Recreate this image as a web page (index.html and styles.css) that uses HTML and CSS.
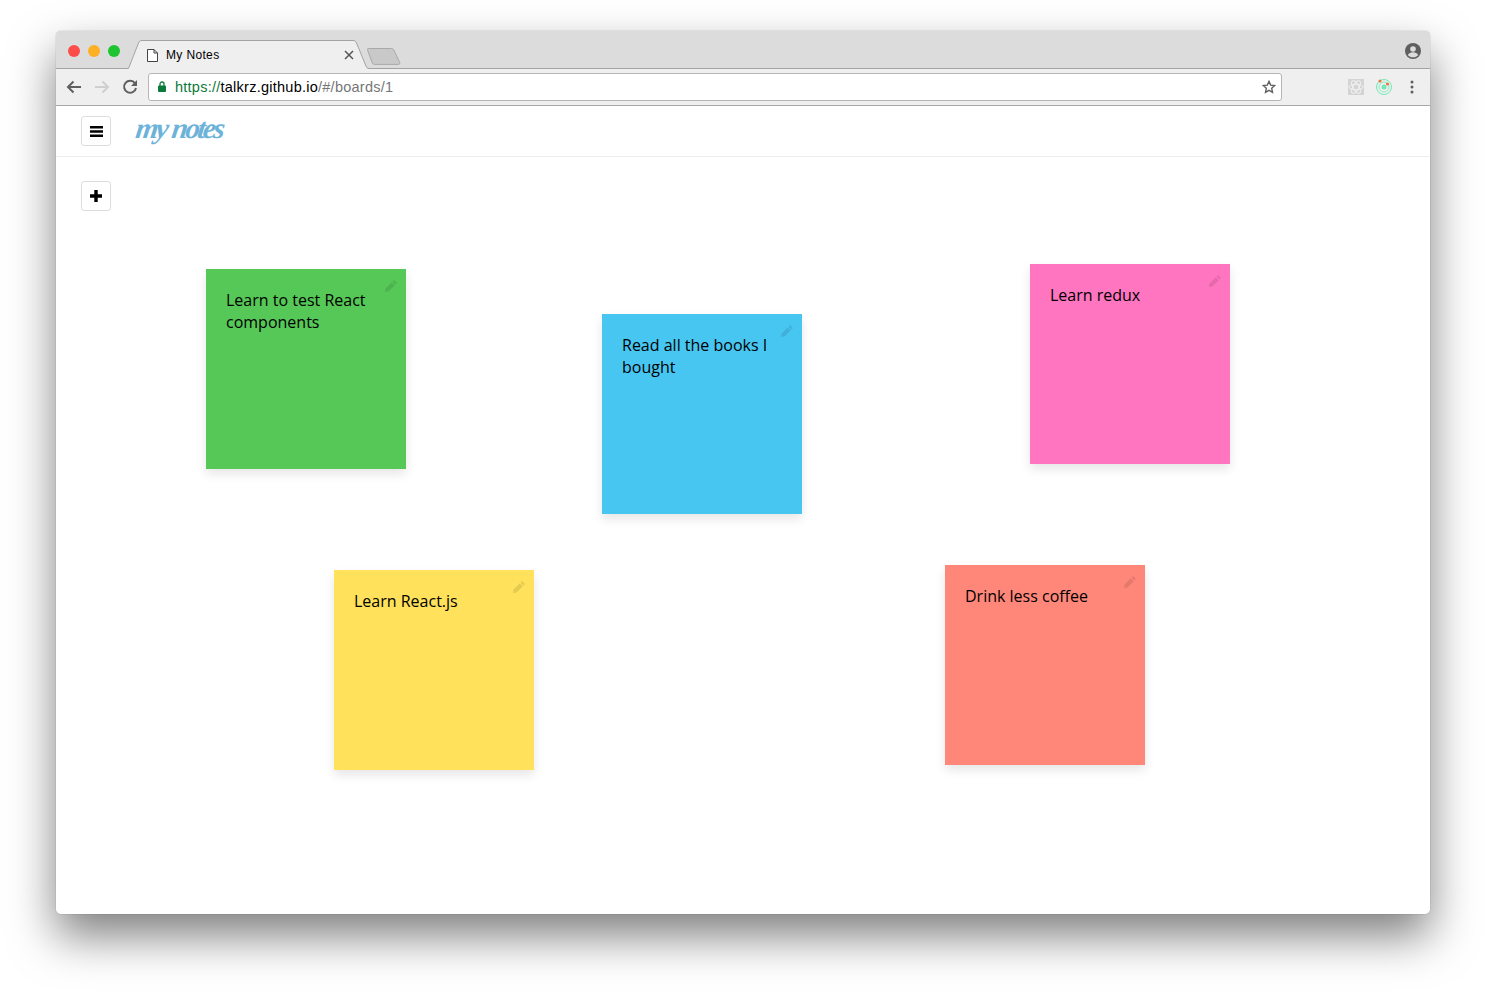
FILE: index.html
```html
<!DOCTYPE html>
<html lang="en">
<head>
    <meta charset="UTF-8">
    <title>My Notes</title>
    <link rel="stylesheet" href="styles.css">
</head>
<body>
    <div class="window">
        <div class="tabstrip">
            <div class="lights">
                <span class="light red"></span>
                <span class="light yellow"></span>
                <span class="light green"></span>
            </div>
            <div class="tab">
                <svg class="tab-shape" width="246" height="29" viewBox="0 0 246 29">
                    <path d="M0 29L10.500 3C11.200 1.400 12 .5 14 .5h211c2 0 2.800.9 3.500 2.500L238 26c.7 1.600 1.500 3 3.500 3z" fill="#efefef"/>
                    <path d="M0 28.500h.5L10.500 3C11.200 1.400 12 .5 14 .5h211c2 0 2.800.9 3.500 2.500L238 26c.7 1.600 1.500 2.500 3.500 2.500h4.500" fill="none" stroke="#a3a3a3"/>
                </svg>
                <svg class="page-icon" width="11" height="13" viewBox="0 0 11 13">
                    <path d="M.5.5h6.500l3.500 3.500v8.500h-10zM7 .5v3.500h3.500" fill="#fff" stroke="#444"/>
                </svg>
                <span class="tab-title">My Notes</span>
                <svg class="tab-close" width="10" height="10" viewBox="0 0 10 10">
                    <path d="M1 1l8 8M9 1l-8 8" stroke="#555" stroke-width="1.500"/>
                </svg>
            </div>
            <svg class="new-tab" width="34" height="17" viewBox="0 0 34 17">
                <path d="M1.500.5h23c1.200 0 1.800.5 2.300 1.400l5.900 12.600c.4 1-.1 1.900-1.300 1.900h-24c-1 0-1.600-.5-2-1.300L.5 2C0 1.200.4.500 1.500.5z" fill="#c9c9c9" stroke="#a8a8a8"/>
            </svg>
            <svg class="profile" width="16" height="16" viewBox="0 0 16 16">
                <circle cx="8" cy="8" r="8" fill="#5f5f5f"/>
                <circle cx="8" cy="6" r="2.800" fill="#dcdcdc"/>
                <path d="M2.800 12c1-2 3-2.800 5.200-2.800s4.200.8 5.200 2.800c-1.300 1.500-3.100 2.300-5.200 2.300S4.100 13.500 2.800 12z" fill="#dcdcdc"/>
            </svg>
        </div>

        <div class="toolbar">
            <svg class="tool-icon" width="16" height="14" viewBox="0 0 16 14">
                <path d="M15 7H2.500M7.500 1.500L2 7l5.500 5.500" fill="none" stroke="#5f5f5f" stroke-width="2"/>
            </svg>
            <svg class="tool-icon" width="16" height="14" viewBox="0 0 16 14">
                <path d="M1 7h12.500M8.500 1.500L14 7l-5.500 5.500" fill="none" stroke="#cfcfcf" stroke-width="2"/>
            </svg>
            <svg class="tool-icon" width="16" height="16" viewBox="0 0 16 16">
                <path d="M13 4.300A6 6 0 1 0 14 9" fill="none" stroke="#5f5f5f" stroke-width="2"/>
                <path d="M15 1v6H9z" fill="#5f5f5f"/>
            </svg>
            <div class="omnibox">
                <svg class="lock" width="8" height="11" viewBox="0 0 8 11">
                    <path d="M2 5V3a2 2 0 0 1 4 0v2" fill="none" stroke="#0b7a3b" stroke-width="1.300"/>
                    <rect y="4.500" width="8" height="6.500" rx="1" fill="#0b7a3b"/>
                </svg>
                <span class="url"><span class="url-scheme">https://</span><span class="url-host">talkrz.github.io</span><span class="url-path">/#/boards/1</span></span>
                <svg class="star" width="14" height="14" viewBox="0 0 14 14">
                    <path d="M7 1.400l1.700 3.700 4 .5-3 2.700.8 4L7 10.300l-3.500 2 .8-4-3-2.700 4-.5z" fill="none" stroke="#5f5f5f" stroke-width="1.400"/>
                </svg>
            </div>
            <div class="extensions">
                <svg width="16" height="16" viewBox="0 0 16 16">
                    <rect width="16" height="16" fill="#d4d4d4"/>
                    <g fill="none" stroke="#f1f1f1">
                        <ellipse cx="8" cy="8" rx="7" ry="2.800"/>
                        <ellipse cx="8" cy="8" rx="7" ry="2.800" transform="rotate(60 8 8)"/>
                        <ellipse cx="8" cy="8" rx="7" ry="2.800" transform="rotate(120 8 8)"/>
                    </g>
                </svg>
                <svg width="16" height="16" viewBox="0 0 16 16">
                    <circle cx="8" cy="8" r="7.500" fill="none" stroke="#6fe9b5"/>
                    <circle cx="8" cy="8" r="5" fill="none" stroke="#8cecc5"/>
                    <circle cx="8" cy="8" r="2.500" fill="#6fe9b5"/>
                    <circle cx="4" cy="2" r="1.500" fill="#f0703a"/>
                    <circle cx="11.500" cy="5" r="1.500" fill="#f0703a"/>
                </svg>
                <svg class="menu-dots" width="4" height="14" viewBox="0 0 4 14">
                    <circle cx="2" cy="2" r="1.500" fill="#5f5f5f"/>
                    <circle cx="2" cy="7" r="1.500" fill="#5f5f5f"/>
                    <circle cx="2" cy="12" r="1.500" fill="#5f5f5f"/>
                </svg>
            </div>
        </div>

        <div class="page">
            <nav class="navbar">
                <button class="icon-btn">
                    <svg width="13" height="11" viewBox="0 0 13 11">
                        <path d="M0 1.200h13M0 5.500h13M0 9.800h13" stroke="#000" stroke-width="2.400"/>
                    </svg>
                </button>
                <span class="logo">my notes</span>
            </nav>
            <div class="board">
                <button class="icon-btn">
                    <svg width="12" height="12" viewBox="0 0 12 12">
                        <path d="M6 0v12M0 6h12" stroke="#000" stroke-width="3.400"/>
                    </svg>
                </button>

                <div class="note note-green" style="left: 150px; top: 111.5px;">
                    <svg class="pencil" width="12" height="12" viewBox="0 0 12 12"><path d="M9 0l3 3-1.500 1.500-3-3zM6.800 2.200l3 3-6.300 6.300L0 12l.5-3.500z"/></svg>
                    Learn to test React components
                </div>
                <div class="note note-blue" style="left: 546px; top: 157px;">
                    <svg class="pencil" width="12" height="12" viewBox="0 0 12 12"><path d="M9 0l3 3-1.500 1.500-3-3zM6.800 2.200l3 3-6.300 6.300L0 12l.5-3.500z"/></svg>
                    Read all the books I bought
                </div>
                <div class="note note-pink" style="left: 974px; top: 107px;">
                    <svg class="pencil" width="12" height="12" viewBox="0 0 12 12"><path d="M9 0l3 3-1.500 1.500-3-3zM6.800 2.200l3 3-6.300 6.300L0 12l.5-3.500z"/></svg>
                    Learn redux
                </div>
                <div class="note note-yellow" style="left: 278px; top: 413px;">
                    <svg class="pencil" width="12" height="12" viewBox="0 0 12 12"><path d="M9 0l3 3-1.500 1.500-3-3zM6.800 2.200l3 3-6.300 6.300L0 12l.5-3.500z"/></svg>
                    Learn React.js
                </div>
                <div class="note note-salmon" style="left: 889px; top: 408px;">
                    <svg class="pencil" width="12" height="12" viewBox="0 0 12 12"><path d="M9 0l3 3-1.500 1.500-3-3zM6.800 2.200l3 3-6.300 6.300L0 12l.5-3.500z"/></svg>
                    Drink less coffee
                </div>
            </div>
        </div>
    </div>
</body>
</html>
```

FILE: styles.css
```css
html, body {
    height: 100%;
}

body {
    margin: 0;
    background-color: #ffffff;
    font-family: 'Liberation Sans', Arial, sans-serif;
    color: #000;
    overflow: hidden;
}

.window {
    position: absolute;
    left: 56px;
    top: 31px;
    width: 1374px;
    height: 883px;
    display: flex;
    flex-direction: column;
    border-radius: 5px;
    overflow: hidden;
    box-shadow: 0 22px 46px rgba(0, 0, 0, 0.5), 0 0 1px rgba(0, 0, 0, 0.5);
}

.tabstrip {
    position: relative;
    flex: 0 0 38px;
    box-sizing: border-box;
    display: flex;
    align-items: flex-end;
    background-color: #dcdcdc;
    border-bottom: 1px solid #a3a3a3;
}

.lights {
    display: flex;
    gap: 8px;
    align-self: flex-start;
    margin: 14px 0 0 12px;
}

.light {
    width: 12px;
    height: 12px;
    border-radius: 50%;
}

.red { background-color: #fc4d4a; }
.yellow { background-color: #fdb024; }
.green { background-color: #1fc431; }

.tab {
    position: absolute;
    left: 72px;
    top: 9px;
    width: 246px;
    height: 29px;
}

.tab-shape {
    position: absolute;
    left: 0;
    top: 0;
}

.page-icon {
    position: absolute;
    left: 19px;
    top: 9px;
}

.tab-title {
    position: absolute;
    left: 38px;
    top: 8px;
    font-size: 12px;
    line-height: 15px;
    letter-spacing: 0.35px;
}

.tab-close {
    position: absolute;
    left: 216px;
    top: 10px;
}

.new-tab {
    position: absolute;
    left: 311px;
    top: 17px;
}

.profile {
    position: absolute;
    right: 9px;
    top: 12px;
}

.toolbar {
    flex: 0 0 37px;
    box-sizing: border-box;
    display: flex;
    align-items: center;
    padding: 0 10px 1px 10px;
    background-color: #efefef;
    border-bottom: 1px solid #a8a8a8;
}

.tool-icon {
    flex: 0 0 16px;
    margin-right: 12px;
}

.omnibox {
    flex: 0 0 1134px;
    box-sizing: border-box;
    height: 28px;
    margin-left: -2px;
    display: flex;
    align-items: center;
    padding: 0 5px 0 9px;
    background-color: #fff;
    border: 1px solid #b5b5b5;
    border-radius: 3px;
}

.lock {
    margin-right: 9px;
}

.url {
    flex: 1;
    font-size: 14.5px;
    letter-spacing: 0.25px;
}

.url-scheme { color: #0b7a3b; }
.url-host { color: #000; }
.url-path { color: #767676; }

.extensions {
    display: flex;
    align-items: center;
    gap: 12px;
    margin-left: 66px;
}

.menu-dots {
    margin-left: 6px;
}

.page {
    flex: 1;
    display: flex;
    flex-direction: column;
    background-color: #fff;
}

.navbar {
    flex: 0 0 51px;
    box-sizing: border-box;
    display: flex;
    align-items: center;
    padding: 0 25px 0;
    border-bottom: 1px solid #eeeeee;
}

.icon-btn {
    width: 30px;
    height: 30px;
    padding: 0;
    display: flex;
    align-items: center;
    justify-content: center;
    background-color: #fff;
    border: 1px solid #dddddd;
    border-radius: 3px;
}

.logo {
    display: inline-block;
    margin: -5px 0 0 25px;
    font-family: 'Liberation Serif', serif;
    font-size: 29px;
    font-style: italic;
    font-weight: bold;
    letter-spacing: -2.5px;
    word-spacing: 1px;
    color: #6db3d9;
    transform: skewX(-8deg);
}

.board {
    position: relative;
    flex: 1;
    padding: 24px 25px;
}

.note {
    position: absolute;
    box-sizing: border-box;
    width: 200px;
    height: 200px;
    padding: 20px;
    font-family: 'Open Sans', sans-serif;
    font-size: 16px;
    line-height: 22px;
    box-shadow: 0 5px 10px rgba(0, 0, 0, 0.1);
}

.note-green { background-color: #56c857; }
.note-blue { background-color: #48c6f2; }
.note-pink { background-color: #ff75bf; }
.note-yellow { background-color: #ffe15b; }
.note-salmon { background-color: #ff8779; }

.pencil {
    position: absolute;
    top: 11px;
    right: 9px;
    fill: rgba(0, 0, 0, 0.1);
}
```
